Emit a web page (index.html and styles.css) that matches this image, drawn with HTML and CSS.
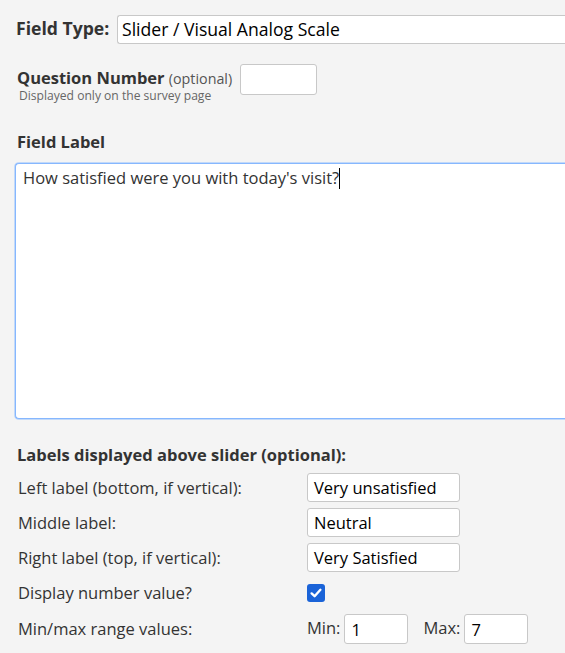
FILE: index.html
```html
<!DOCTYPE html>
<html>
<head>
<meta charset="utf-8">
<link rel="stylesheet" href="styles.css">
</head>
<body>
<div class="page">
  <div class="type-row">
    <span class="type-label">Field Type:</span>
    <div class="type-select">Slider / Visual Analog Scale</div>
  </div>

  <div class="qnum-row">
    <div class="qnum-text">
      <div class="qnum-line"><span class="bold-label">Question Number</span> <span class="optional">(optional)</span></div>
      <div class="hint">Displayed only on the survey page</div>
    </div>
    <div class="box qnum-input"></div>
  </div>

  <div class="bold-label field-label-title">Field Label</div>
  <div class="textarea">How satisfied were you with today's visit?<span class="caret"></span></div>

  <div class="bold-label slider-title">Labels displayed above slider (optional):</div>
  <div class="slider-grid">
    <div class="row-label">Left label (bottom, if vertical):</div>
    <div class="box text-input">Very unsatisfied</div>

    <div class="row-label">Middle label:</div>
    <div class="box text-input">Neutral</div>

    <div class="row-label">Right label (top, if vertical):</div>
    <div class="box text-input">Very Satisfied</div>

    <div class="row-label">Display number value?</div>
    <div class="check-cell">
      <span class="checkbox">
        <svg viewBox="0 0 18 18" width="18" height="18"><path d="M4.6 9.4 L7.6 12.2 L13.4 5.8" fill="none" stroke="#fff" stroke-width="2.4" stroke-linecap="round" stroke-linejoin="round"/></svg>
      </span>
    </div>

    <div class="row-label range-row-label">Min/max range values:</div>
    <div class="range-cell">
      <span class="range-label">Min:</span>
      <div class="box small-input">1</div>
      <span class="range-label max-label">Max:</span>
      <div class="box small-input">7</div>
    </div>
  </div>
</div>
</body>
</html>
```

FILE: styles.css
```css
html, body {
  margin: 0;
  padding: 0;
  background: #f4f4f4;
}
body {
  font-family: "Open Sans", "Liberation Sans", sans-serif;
  color: #333;
  width: 565px;
  height: 653px;
  overflow: hidden;
}
.page {
  padding: 15px 0 0 16px;
}
.type-row {
  display: flex;
  align-items: flex-start;
  height: 29px;
}
.type-label {
  font-weight: 700;
  font-size: 17.6px;
  line-height: 24px;
  width: 101px;
  flex: none;
  margin-top: 1px;
  color: #333;
}
.type-select {
  flex: 1;
  height: 29px;
  box-sizing: border-box;
  border: 1px solid #c8c8c8;
  border-right: none;
  border-radius: 3px 0 0 3px;
  background: #fff;
  font-size: 17.6px;
  line-height: 27px;
  padding-left: 4px;
  color: #000;
}
.qnum-row {
  display: flex;
  align-items: flex-start;
  margin-top: 20px;
}
.qnum-text {
  padding-left: 1px;
  padding-top: 3px;
  width: 223px;
}
.qnum-line {
  line-height: 22px;
  white-space: nowrap;
}
.bold-label {
  font-weight: 700;
  font-size: 16.5px;
  color: #333;
}
.optional {
  font-size: 14.3px;
  color: #555;
}
.hint {
  font-size: 12.1px;
  color: #666;
  line-height: 14px;
  margin-left: 2px;
  margin-top: -1px;
  white-space: nowrap;
}
.box {
  box-sizing: border-box;
  background: #fff;
  border: 1px solid #c8c8c8;
  border-radius: 3px;
}
.qnum-input {
  width: 77px;
  height: 31px;
}
.field-label-title {
  margin-top: 28px;
  margin-left: 1px;
  line-height: 22px;
}
.textarea {
  margin-top: 10px;
  margin-left: -1px;
  height: 256px;
  box-sizing: border-box;
  background: #fff;
  border: 1px solid #86b7fe;
  border-right: none;
  border-radius: 4px 0 0 4px;
  box-shadow: -1px 0 0 0 rgba(134, 183, 254, 0.45), 0 1px 0 0 rgba(134, 183, 254, 0.45), 0 -1px 0 0 rgba(134, 183, 254, 0.45);
  padding: 3px 7px;
  font-size: 16.5px;
  line-height: 22px;
  color: #333;
}
.caret {
  display: inline-block;
  width: 1px;
  height: 21px;
  background: #000;
  vertical-align: -5px;
}
.slider-title {
  margin-top: 25px;
  margin-left: 1px;
  line-height: 22px;
}
.slider-grid {
  display: grid;
  grid-template-columns: 289px auto;
  grid-template-rows: 29px 29px 29px 29px 31px;
  row-gap: 6px;
  margin-top: 7px;
  margin-left: 2px;
  align-items: center;
}
.row-label {
  font-size: 16.5px;
  line-height: 22px;
  color: #333;
}
.text-input {
  width: 153px;
  height: 29px;
  font-size: 16.5px;
  line-height: 27px;
  padding-left: 6px;
  color: #000;
}
.check-cell {
  display: flex;
  align-items: center;
}
.checkbox {
  width: 18px;
  height: 18px;
  border-radius: 3px;
  background: #1a63d8;
  display: flex;
  align-items: center;
  justify-content: center;
}
.checkbox svg {
  display: block;
}
.range-row-label {
  align-self: center;
}
.range-cell {
  display: flex;
  align-items: center;
  align-self: end;
  height: 30px;
}
.range-label {
  font-size: 16.5px;
  line-height: 22px;
  color: #333;
  margin-top: -3px;
}
.range-label + .small-input {
  margin-left: 4px;
}
.max-label {
  margin-left: 15px;
}
.small-input {
  width: 64px;
  height: 30px;
  font-size: 16.5px;
  line-height: 26px;
  padding-top: 2px;
  padding-left: 6px;
  color: #000;
}
```
